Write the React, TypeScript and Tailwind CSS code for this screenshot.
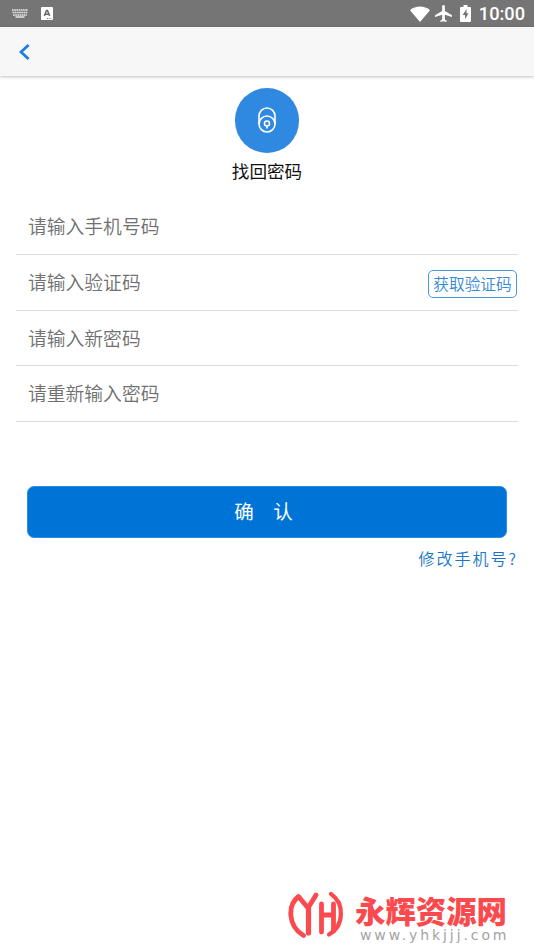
import React, { useState } from 'react';

interface FieldProps {
  type?: string;
  placeholder: string;
  value: string;
  onChange: (value: string) => void;
  children?: React.ReactNode;
}

const Field: React.FC<FieldProps> = ({ type = 'text', placeholder, value, onChange, children }) => (
  <div className="flex h-[55.7px] items-center border-b border-[#dedede] pl-3">
    <input
      type={type}
      className="min-w-0 flex-1 bg-transparent pb-px text-[18.8px] leading-7 font-[350] placeholder:text-[#707070] focus:outline-none"
      placeholder={placeholder}
      value={value}
      onChange={e => onChange(e.target.value)}
    />
    {children}
  </div>
);

const StatusBar = () => (
  <div className="flex h-[27px] shrink-0 items-center bg-[#757575] pl-3 pr-[9px] text-white">
    <svg className="h-[9px] w-4" viewBox="0 0 16 9" fill="none" stroke="#e6e6e6">
      <path d="M0 1h16M.5 3.5h15M1 6h14" strokeWidth="1.6" strokeDasharray="1.7 .5" />
      <path d="M3.5 8h9" strokeWidth="1.5" />
    </svg>
    <svg className="ml-[13px] h-[13px] w-3" viewBox="0 0 12 13">
      <rect width="12" height="13" rx="1" fill="#fff" />
      <path d="M3.3 9 5.5 3.5h1L8.7 9M4.2 7.2h3.6" fill="none" stroke="#666" strokeWidth="1.5" />
      <path d="M6 11.6h5" stroke="#777" strokeDasharray="1 .7" />
    </svg>
    <svg className="ml-auto h-4 w-5" viewBox="0 0 20 16" fill="currentColor">
      <path d="M0 4.2C5.5-.6 14.5-.6 20 4.2L10 16Z" />
    </svg>
    <svg className="ml-[5px] h-[17px] w-[17px]" viewBox="2 2 19 20" preserveAspectRatio="none" fill="currentColor">
      <path d="M21 16v-2l-8-5V3.5a1.5 1.5 0 0 0-3 0V9l-8 5v2l8-2.5V19l-2 1.5V22l3.5-1 3.5 1v-1.5L13 19v-5.5z" />
    </svg>
    <svg className="mb-px ml-[8px] h-[17px] w-[11px]" viewBox="0 0 11 17">
      <path d="M3.5 0h4v2H10q1 0 1 1v13q0 1-1 1H1q-1 0-1-1V3q0-1 1-1h2.500z" fill="#fff" />
      <path d="M6.500 4 2.700 10h2.300v4.200L8.600 8.300H6.500z" fill="#757575" />
    </svg>
    <span className="ml-[8px] mt-px font-[Roboto] text-[18.2px] font-medium leading-none">10:00</span>
  </div>
);

const Watermark = () => (
  <div className="absolute left-[288px] top-[890px] flex">
    <svg
      className="h-[50px] w-[56px]"
      viewBox="0 0 56 50"
      fill="none"
      stroke="#fb4a4d"
      strokeWidth="4.8"
      strokeLinecap="round"
      strokeLinejoin="round"
    >
      <path d="M15.5 45.5C-.5 36-.5 15 10.500 6.500L20 18 28 5" />
      <path d="M20.500 18v25" strokeWidth="5.200" />
      <path d="M33.500 14v28M33.500 25h12M45.500 14v27" />
      <path d="M43 4C56.500 13 56.500 36 41 44.500" strokeWidth="4.200" />
    </svg>
    <div className="ml-[11px] mt-[4px] flex flex-col">
      <span className="text-[30.4px] font-black leading-[32px] text-[#fb4a4d]">永辉资源网</span>
      <span className="pl-[5px] font-['DejaVu_Sans'] text-[14px] leading-[18px] tracking-[2.9px] text-[#a3a3a3]">
        www.yhkjjj.com
      </span>
    </div>
  </div>
);

export default function App() {
  const [phone, setPhone] = useState('');
  const [code, setCode] = useState('');
  const [password, setPassword] = useState('');
  const [confirm, setConfirm] = useState('');

  return (
    <div className="relative flex h-[950px] w-[534px] flex-col overflow-hidden bg-white font-['Noto_Sans_CJK_SC',sans-serif]">
      <StatusBar />
      <header className="flex h-[49px] shrink-0 items-center bg-[#f7f7f7] pl-[19px] shadow-[0_1px_3px_rgba(0,0,0,0.25)]">
        <button type="button" aria-label="返回">
          <svg className="h-4 w-[11px]" viewBox="0 0 11 16" fill="none" stroke="#1b7ce5" strokeWidth="2.7">
            <path d="M9.6 1 2 8l7.6 7" />
          </svg>
        </button>
      </header>

      <div className="flex flex-col items-center pt-3">
        <div className="flex size-[64.5px] items-center justify-center rounded-full bg-[#3089e0]">
          <svg className="h-[26px] w-[18px]" viewBox="0 0 18 26" fill="none" stroke="#fff" strokeWidth="1.6">
            <rect x="1" y="1" width="16" height="24" rx="8" />
            <path d="M1 17a8 8 0 0 1 16 0" />
            <circle cx="9" cy="16.5" r="2.5" />
            <path d="M9 19v2.5" />
          </svg>
        </div>
        <h1 className="mt-[4px] text-[17.6px] leading-7 text-[#111]">找回密码</h1>
      </div>

      <form className="mt-[14.8px] flex flex-col px-4" onSubmit={e => e.preventDefault()}>
        <Field type="tel" placeholder="请输入手机号码" value={phone} onChange={setPhone} />
        <Field placeholder="请输入验证码" value={code} onChange={setCode}>
          <button
            type="button"
            className="mr-px mt-1 flex h-7 w-[89px] items-center justify-center rounded-[5px] border border-[#4a97dc] pb-px text-[15.7px] font-[350] text-[#3388d6]"
          >
            获取验证码
          </button>
        </Field>
        <Field type="password" placeholder="请输入新密码" value={password} onChange={setPassword} />
        <Field type="password" placeholder="请重新输入密码" value={confirm} onChange={setConfirm} />
        <button
          type="submit"
          className="ml-[10.5px] mr-[11px] mt-16 h-[52px] rounded-[7px] border border-[#2d8fe2] bg-[#0074d6] pb-[2px] pl-[13px] text-[19.5px] tracking-[19.5px] text-white"
        >
          确认
        </button>
        <a href="#" className="mt-[8px] self-end text-[16px] leading-6 font-[350] tracking-[2px] text-[#1976c5]">
          修改手机号?
        </a>
      </form>

      <Watermark />
    </div>
  );
}
